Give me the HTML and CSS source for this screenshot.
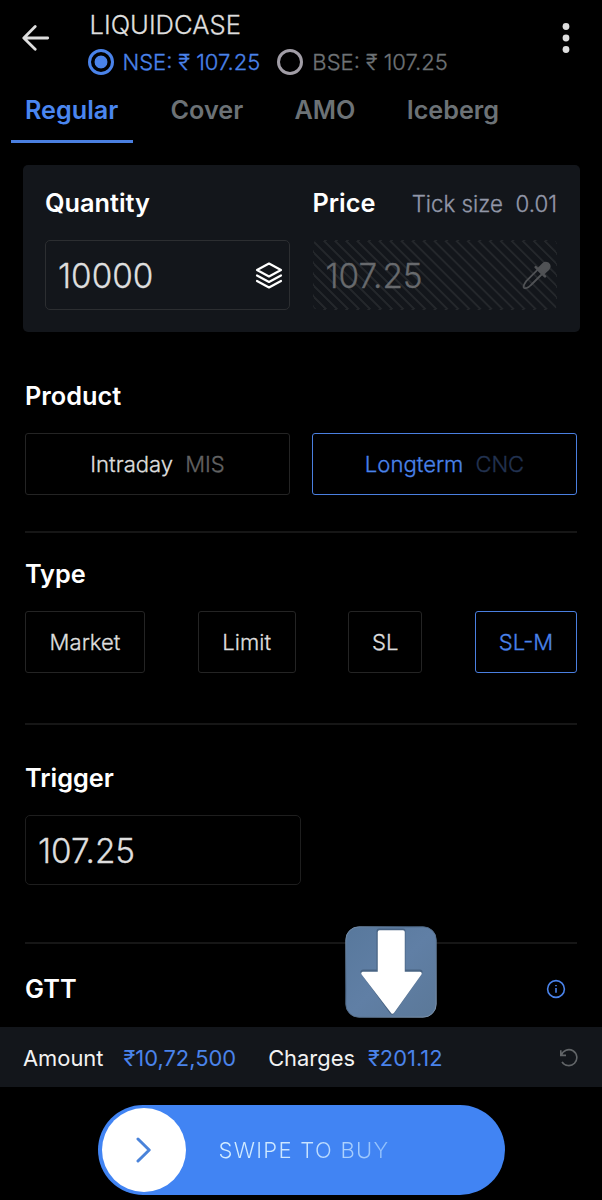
FILE: index.html
```html
<!DOCTYPE html>
<html lang="en">

<head>
    <meta charset="UTF-8">
    <meta name="viewport" content="width=device-width, initial-scale=1.0">
    <title>LIQUIDCASE - Buy</title>
    <link rel="stylesheet" href="styles.css">
</head>

<body>
    <header>
        <svg class="back" width="28" height="28" viewBox="0 0 28 28">
            <path d="M25.700 14H2.300M13.200 2.600L1.800 14L13.200 25.200" />
        </svg>
        <div class="instrument">
            <h1>LIQUIDCASE</h1>
            <div class="exchanges">
                <label class="exchange selected"><span class="radio"></span><span class="quote">NSE: ₹ 107.25</span></label>
                <label class="exchange"><span class="radio"></span><span class="quote">BSE: ₹ 107.25</span></label>
            </div>
        </div>
        <svg class="menu" width="8" height="32" viewBox="0 0 8 32">
            <circle cx="4" cy="4.5" r="3.4" />
            <circle cx="4" cy="16" r="3.4" />
            <circle cx="4" cy="27.5" r="3.4" />
        </svg>
    </header>

    <nav>
        <a class="tab active">Regular</a>
        <a class="tab">Cover</a>
        <a class="tab">AMO</a>
        <a class="tab">Iceberg</a>
    </nav>

    <main>
        <section class="panel">
            <div class="field">
                <h2>Quantity</h2>
                <div class="input">
                    <span>10000</span>
                    <svg class="layers" width="28" height="28" viewBox="0 0 28 28">
                        <path d="M14 1.500L26 8L14 14.500L2 8ZM2 13.500L14 20L26 13.500M2 19L14 25.500L26 19" />
                    </svg>
                </div>
            </div>
            <div class="field">
                <div class="field-head">
                    <h2>Price</h2>
                    <span class="tick">Tick size&nbsp; 0.01</span>
                </div>
                <div class="input disabled">
                    <span>107.25</span>
                    <svg class="dropper" width="30" height="30" viewBox="0 0 30 30">
                        <path class="tube" d="M17.200 8.200L5.500 19.800Q2.400 24.200 2.600 26.200Q3.200 27.800 5.500 27Q8 26.200 10 24L21.600 12.500" />
                        <path class="collar" d="M14.700 6.200L24 15.400" />
                        <path class="bulb" d="M16.800 8.200L22 2.800Q24.200 .8 27 2.300Q30 4.800 27.700 8L22 13.300Z" />
                    </svg>
                </div>
            </div>
        </section>

        <section class="product">
            <h2>Product</h2>
            <div class="options">
                <div class="option">Intraday <small>MIS</small></div>
                <div class="option active">Longterm <small>CNC</small></div>
            </div>
        </section>

        <section class="type">
            <h2>Type</h2>
            <div class="options">
                <div class="option market">Market</div>
                <div class="option limit">Limit</div>
                <div class="option sl">SL</div>
                <div class="option slm active">SL-M</div>
            </div>
        </section>

        <section class="trigger">
            <h2>Trigger</h2>
            <div class="input"><span>107.25</span></div>
        </section>

        <section class="gtt">
            <h2>GTT</h2>
            <svg class="info" width="20" height="20" viewBox="0 0 20 20">
                <circle cx="10" cy="10" r="8.4" />
                <path d="M10 9V13.700M10 5.900V7.300" />
            </svg>
        </section>
    </main>

    <div class="summary">
        <span class="label">Amount</span>
        <span class="value amount">₹10,72,500</span>
        <span class="label charge-label">Charges</span>
        <span class="value charges">₹201.12</span>
        <svg class="refresh" width="20" height="20" viewBox="0 0 20 20">
            <path d="M1.800 2.200V7.400H7M2.200 7.200A8 8 0 1 1 3 13.800" />
        </svg>
    </div>

    <footer>
        <div class="swipe">
            <div class="knob">
                <svg width="16" height="26" viewBox="0 0 16 26">
                    <path d="M2 2L13.200 13L2 24" />
                </svg>
            </div>
            <span class="swipe-text">SWIPE TO BUY</span>
        </div>
    </footer>

    <!-- down arrow sticker over the page -->
    <svg class="sticker" width="92" height="92" viewBox="0 0 92 92">
        <defs>
            <linearGradient id="tile" x1="0" y1="0" x2="1" y2="1">
                <stop offset="0" stop-color="#58789c" />
                <stop offset="0.5" stop-color="#607fa5" />
                <stop offset="1" stop-color="#5b7898" />
            </linearGradient>
            <linearGradient id="edge" x1="0" y1="0" x2="1" y2="1">
                <stop offset="0" stop-color="#7892ae" />
                <stop offset="0.35" stop-color="#46607e" />
                <stop offset="1" stop-color="#8298b0" />
            </linearGradient>
        </defs>
        <rect x="0.8" y="0.8" width="90.4" height="90.4" rx="13" fill="url(#tile)" stroke="url(#edge)" />
        <path class="shade" d="M34 5H58V46H75L47 86L18 46H34Z" />
        <path class="arrow" d="M34.500 6H58V47.500H75L47.500 86L18 47.500H34.500Z" />
    </svg>
</body>

</html>
```
FILE: styles.css
```css
* {
    box-sizing: border-box;
}

body {
    font-family: Inter, "Noto Sans", sans-serif;
    margin: 0;
    width: 602px;
    height: 1200px;
    overflow: hidden;
    position: relative;
    background-color: #000;
    color: #dedede;
}

h1,
h2 {
    margin: 0;
}

h2 {
    font-size: 25.3px;
    line-height: 30px;
    font-weight: 600;
    color: #fff;
}

svg {
    display: block;
    fill: none;
    flex-shrink: 0;
}

/* light text, slightly thickened */
h1,
.quote,
.tick,
.input,
.option {
    font-weight: 300;
    -webkit-text-stroke: 0.3px currentColor;
}

header {
    display: flex;
    height: 86px;
    padding: 9px 32px 0 22px;
}

.back {
    margin-top: 15px;
    stroke: #dedede;
    stroke-width: 2.8;
    stroke-linecap: round;
    stroke-linejoin: round;
}

.instrument {
    flex: 1;
    margin-left: 37.5px;
}

h1 {
    margin-left: 2px;
    font-size: 25.6px;
    line-height: 32px;
}

.exchanges {
    display: flex;
    gap: 17px;
    margin-top: 8px;
}

.exchange {
    display: flex;
    align-items: center;
    gap: 9px;
    font-size: 22px;
    line-height: 26px;
    color: #6e7275;
    white-space: nowrap;
}

.exchange.selected {
    color: #4a83ea;
}

.radio {
    width: 26px;
    height: 26px;
    border: 3px solid #a19da6;
    border-radius: 50%;
}

.selected .radio {
    border-color: #4a83ea;
    background: radial-gradient(circle, #4a83ea 6px, transparent 6.8px);
}

.menu {
    margin-top: 13px;
    fill: #dedede;
}

nav {
    display: flex;
    gap: 23.3px;
    height: 57px;
    padding-left: 11px;
}

.tab {
    padding: 9px 14px 0;
    font-size: 25.2px;
    line-height: 31px;
    font-weight: 600;
    color: #6c7276;
}

.tab.active {
    padding-right: 15px;
    color: #4a86f0;
    border-bottom: 3px solid #4a7fe0;
}

.panel {
    display: flex;
    gap: 23px;
    height: 167px;
    margin: 22px 22px 0 23px;
    padding: 23px 23px 0 22px;
    background-color: #13161b;
    border-radius: 5px;
}

.field {
    width: 245px;
}

.field-head {
    display: flex;
    justify-content: space-between;
    align-items: center;
}

.tick {
    padding-top: 2px;
    font-size: 22.3px;
    line-height: 28px;
    color: #9297a8;
}

.input {
    display: flex;
    align-items: center;
    justify-content: space-between;
    height: 70px;
    margin-top: 22px;
    padding: 2px 6px 0 12px;
    border: 1.5px solid #2c2e31;
    border-radius: 5px;
    font-size: 33.3px;
}

.input.disabled {
    padding-right: 5px;
    border-color: transparent;
    color: #686a6d;
    background: repeating-linear-gradient(45deg, #24272b 0 1.2px, transparent 2px 7.2px, #24272b 7.8px);
}

.layers {
    stroke: #fff;
    stroke-width: 2.2;
    stroke-linejoin: round;
    stroke-linecap: round;
}

.dropper {
    stroke: #505255;
    stroke-width: 1.8;
    stroke-linejoin: round;
    stroke-linecap: round;
}

.dropper .collar {
    stroke-width: 2.6;
}

.dropper .bulb {
    fill: #505255;
}

.product,
.type,
.trigger,
.gtt {
    margin: 0 25px;
    border-bottom: 2px solid #161616;
}

.product {
    height: 201px;
    padding-top: 49px;
}

.options {
    display: flex;
    justify-content: space-between;
}

.product .options {
    margin-top: 22px;
}

.option {
    display: flex;
    align-items: center;
    justify-content: center;
    height: 62px;
    border: 1.5px solid #242424;
    border-radius: 3px;
    font-size: 22.1px;
    color: #dedede;
}

.option.active {
    border-color: #4a7fe0;
    color: #4a83ea;
}

.product .option {
    width: 265px;
    gap: 12px;
}

.option small {
    font-size: 22px;
    color: #626262;
}

.option.active small {
    color: #223250;
}

.type {
    height: 192px;
    padding-top: 26px;
}

.type .options {
    margin-top: 22px;
}

.market {
    width: 120px;
}

.limit {
    width: 98px;
}

.sl {
    width: 74px;
}

.slm {
    width: 102px;
}

.trigger {
    height: 219px;
    padding-top: 38px;
}

.trigger .input {
    width: 276px;
    border-color: #1e1e1e;
}

.gtt {
    display: flex;
    justify-content: space-between;
    height: 83px;
    padding: 30px 11px 0 0;
    border-bottom: none;
}

.info {
    margin-top: 5px;
    stroke: #4a83ea;
    stroke-width: 1.6;
}

.summary {
    display: flex;
    align-items: center;
    height: 60px;
    padding: 1px 23px 0;
    background-color: #13161b;
    font-size: 21.9px;
    font-weight: 400;
    color: #f2f2f2;
}

.amount {
    margin-left: 20px;
}

.charge-label {
    margin-left: 32px;
}

.charges {
    margin-left: 13px;
}

.value {
    color: #4a83ea;
}

.refresh {
    margin-left: auto;
    stroke: #626568;
    stroke-width: 1.6;
}

.swipe {
    display: flex;
    align-items: center;
    width: 407px;
    height: 90px;
    margin: 18px 0 0 97.5px;
    padding-left: 4px;
    border-radius: 46px;
    background-color: #4184f3;
}

.knob {
    display: flex;
    align-items: center;
    justify-content: center;
    width: 84px;
    height: 84px;
    border-radius: 50%;
    background-color: #fff;
}

.knob svg {
    stroke: #4a83da;
    stroke-width: 3;
    stroke-linecap: round;
    stroke-linejoin: round;
}

.swipe-text {
    margin-left: 33px;
    font-size: 22px;
    font-weight: 300;
    letter-spacing: 1.3px;
    color: transparent;
    background: linear-gradient(90deg, #d3edff, #cbe5ff 50%, #8dbdfb);
    -webkit-background-clip: text;
    background-clip: text;
}

.sticker {
    position: absolute;
    left: 345px;
    top: 926px;
}

.sticker .shade {
    fill: #3c5470;
    stroke: #3c5470;
    stroke-width: 5;
    stroke-linejoin: round;
    opacity: 0.6;
}

.sticker .arrow {
    fill: #fff;
    stroke: #fff;
    stroke-width: 3.5;
    stroke-linejoin: round;
}
```
